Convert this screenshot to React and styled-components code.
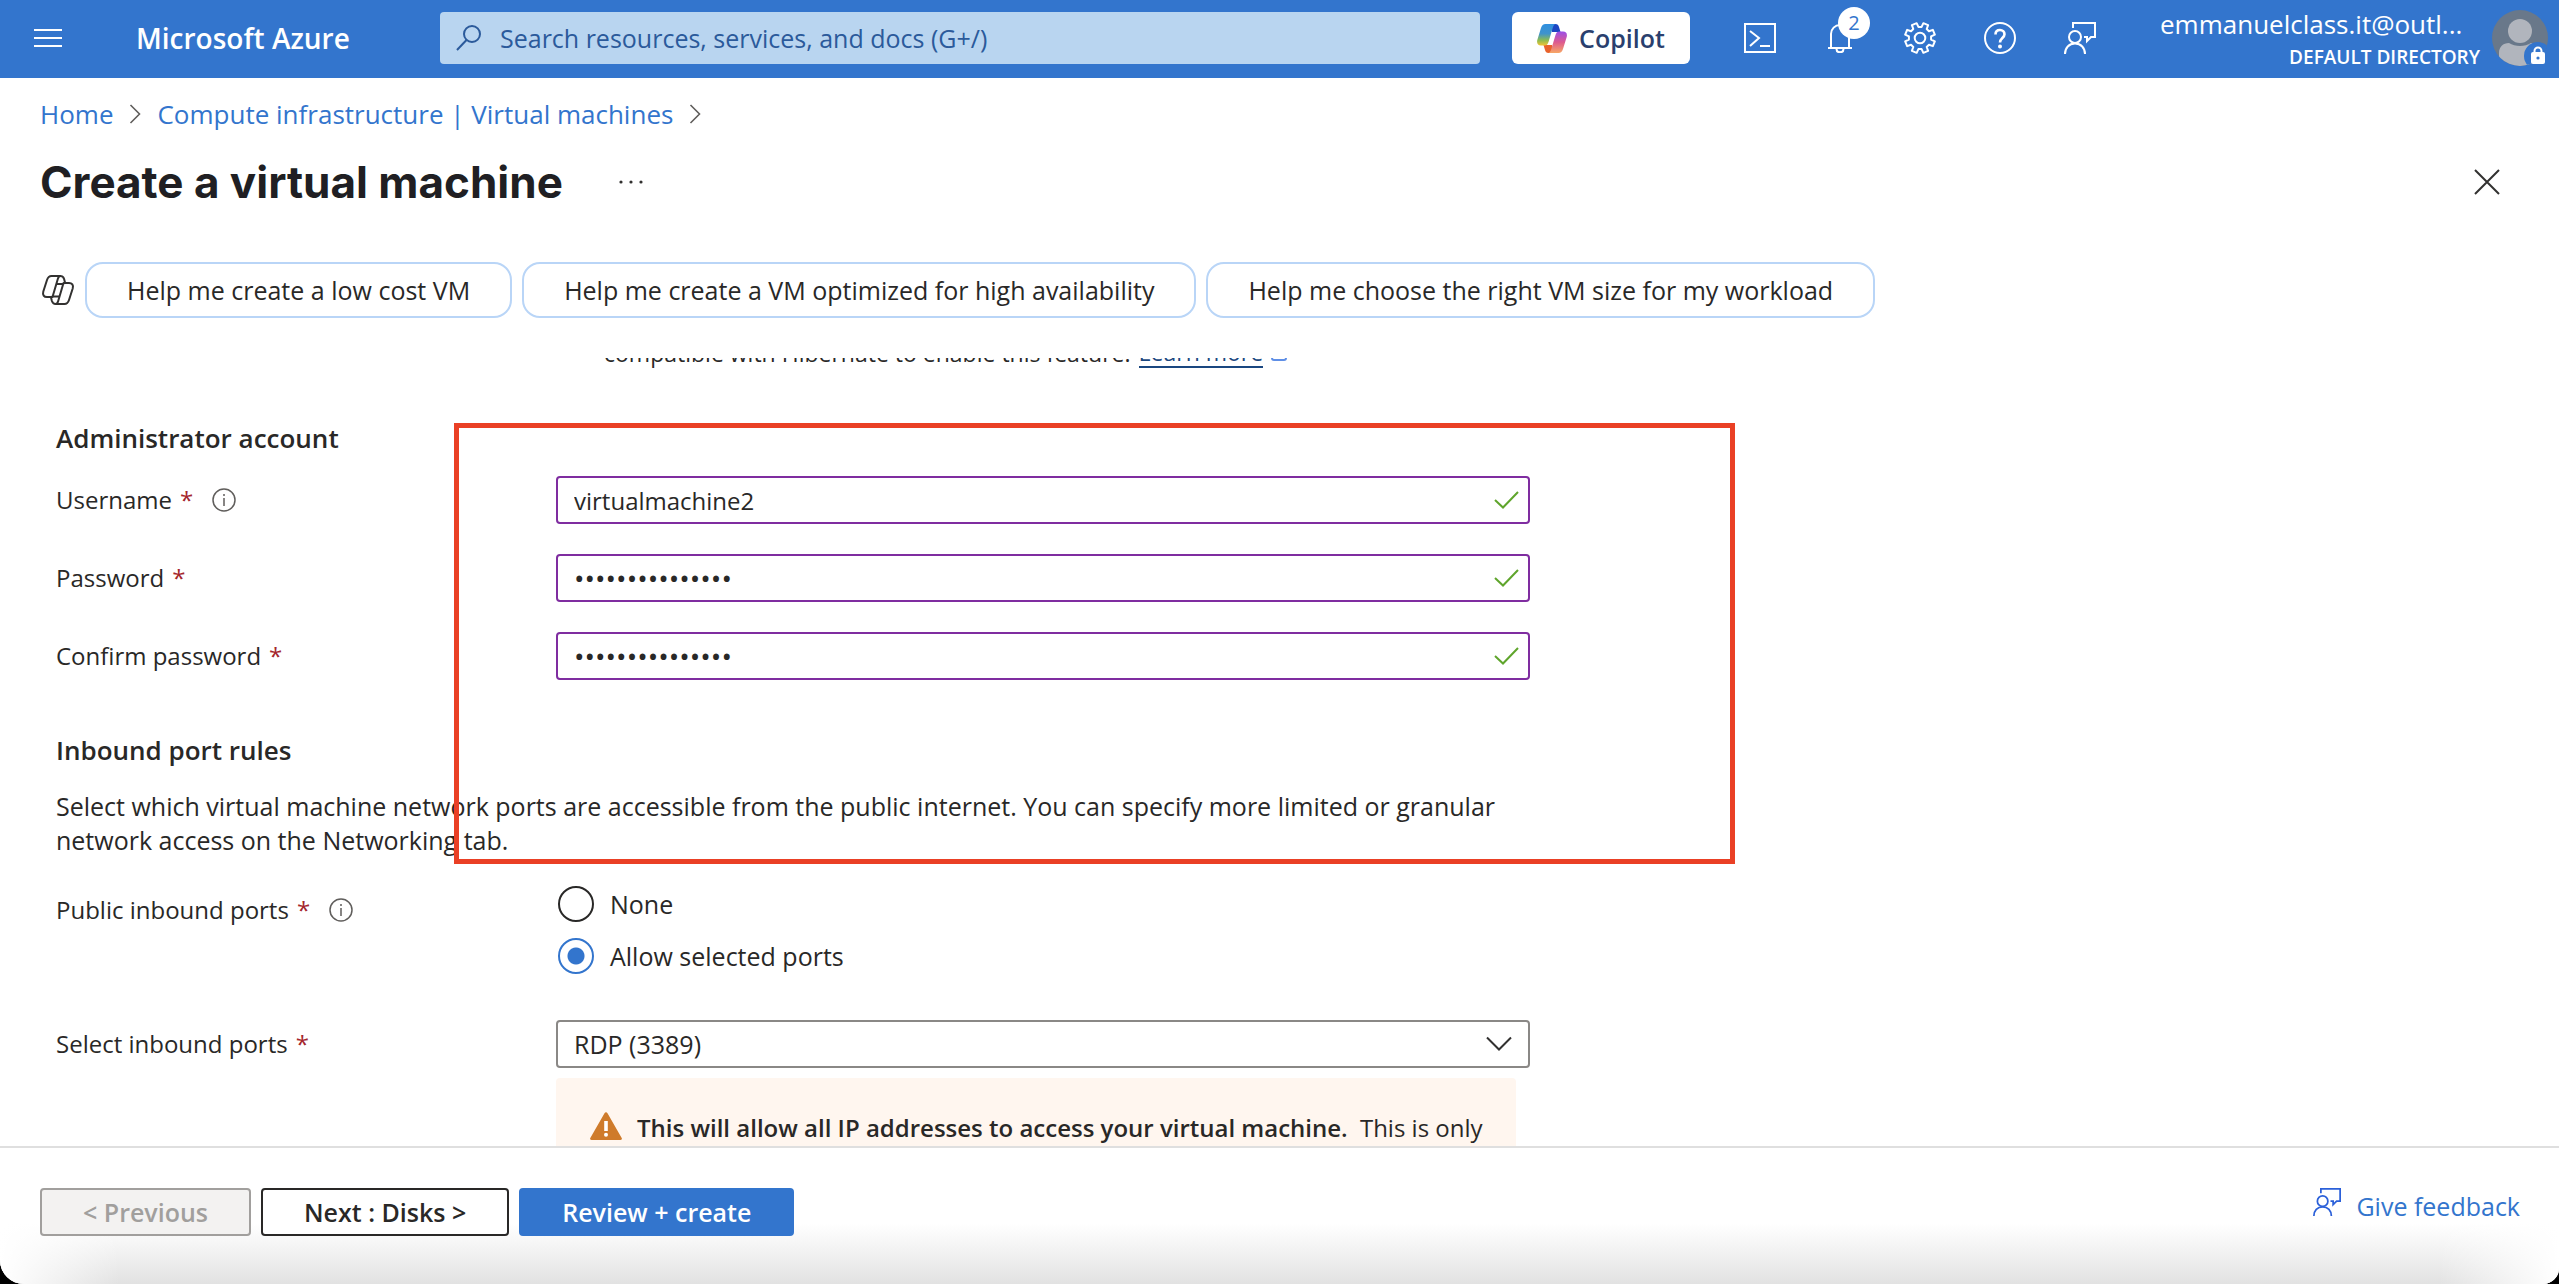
import styled, { createGlobalStyle } from 'styled-components';

const App = () => {
  return (
    <>
      <GlobalStyle />
      <Desktop>
        <Page>
          <Header>
            <IconButton aria-label='Show portal menu'>
              <svg width='28' height='20' viewBox='0 0 28 20' stroke='#fff' strokeWidth='2'>
                <path d='M0 2h28M0 10h28M0 18h28' />
              </svg>
            </IconButton>
            <Brand href='#home'>Microsoft Azure</Brand>
            <Search>
              <svg width='26' height='26' viewBox='0 0 26 26' fill='none' stroke='#2b5a9b' strokeWidth='2'>
                <circle cx='16' cy='9' r='8' />
                <path d='M10.5 15 1 25' />
              </svg>
              <input
                aria-label='Search resources, services, and docs'
                placeholder='Search resources, services, and docs (G+/)'
              />
            </Search>
            <CopilotButton>
              <CopilotLogo />
              Copilot
            </CopilotButton>
            <Tools>
              <IconButton aria-label='Cloud Shell'>
                <ShellIcon />
              </IconButton>
              <IconButton aria-label='Notifications'>
                <BellIcon />
                <Badge>2</Badge>
              </IconButton>
              <IconButton aria-label='Settings'>
                <GearIcon />
              </IconButton>
              <IconButton aria-label='Help'>
                <HelpIcon />
              </IconButton>
              <IconButton aria-label='Feedback'>
                <FeedbackIcon size={32} />
              </IconButton>
            </Tools>
            <Account>
              <AccountText>
                <Email>emmanuelclass.it@outl...</Email>
                <Directory>DEFAULT DIRECTORY</Directory>
              </AccountText>
              <Avatar />
            </Account>
          </Header>

          <Crumbs aria-label='Breadcrumb'>
            <a href='#home'>Home</a>
            <CrumbArrow />
            <a href='#vms'>Compute infrastructure | Virtual machines</a>
            <CrumbArrow />
          </Crumbs>

          <TitleBar>
            <h1>Create a virtual machine</h1>
            <IconButton aria-label='More'>
              <svg width='24' height='4' viewBox='0 0 24 4' fill='#323130'>
                <circle cx='2' cy='2' r='1.6' />
                <circle cx='12' cy='2' r='1.6' />
                <circle cx='22' cy='2' r='1.6' />
              </svg>
            </IconButton>
            <CloseButton aria-label='Close'>
              <svg width='26' height='26' viewBox='0 0 26 26' stroke='#323130' strokeWidth='2'>
                <path d='M1 1l24 24M25 1L1 25' />
              </svg>
            </CloseButton>
          </TitleBar>

          <Suggestions>
            <CopilotOutline />
            <Pill>Help me create a low cost VM</Pill>
            <Pill>Help me create a VM optimized for high availability</Pill>
            <Pill>Help me choose the right VM size for my workload</Pill>
          </Suggestions>

          <Content>
            <Form>
              <Hint>
                compatible with Hibernate to enable this feature.
                <a href='#hibernate'>Learn more</a>
                <svg width='16' height='16' viewBox='0 0 16 16' fill='none' stroke='#5f8fe6' strokeWidth='2'>
                  <path d='M6 2H1v11q0 2 2 2h10q2 0 2-2v-3M9 1h6v6M15 1 7 9' />
                </svg>
              </Hint>

              <SectionTitle>Administrator account</SectionTitle>
              <Highlight />
              <Row>
                <Label htmlFor='username'>
                  Username <Star>*</Star> <InfoIcon />
                </Label>
                <Field>
                  <TextInput id='username' defaultValue='virtualmachine2' />
                  <CheckMark />
                </Field>
              </Row>
              <Row>
                <Label htmlFor='password'>
                  Password <Star>*</Star>
                </Label>
                <Field>
                  <TextInput id='password' type='password' defaultValue='aaaaaaaaaaaaaaa' />
                  <CheckMark />
                </Field>
              </Row>
              <Row>
                <Label htmlFor='confirm'>
                  Confirm password <Star>*</Star>
                </Label>
                <Field>
                  <TextInput id='confirm' type='password' defaultValue='aaaaaaaaaaaaaaa' />
                  <CheckMark />
                </Field>
              </Row>

              <SectionTitle $spaced>Inbound port rules</SectionTitle>
              <Paragraph>
                Select which virtual machine network ports are accessible from the public internet. You can
                specify more limited or granular network access on the Networking tab.
              </Paragraph>

              <PortsRow>
                <Label as='span' id='ports-label'>
                  Public inbound ports <Star>*</Star> <InfoIcon />
                </Label>
                <RadioGroup role='radiogroup' aria-labelledby='ports-label'>
                  <RadioLabel>
                    <Radio name='ports' />
                    None
                  </RadioLabel>
                  <RadioLabel>
                    <Radio name='ports' defaultChecked />
                    Allow selected ports
                  </RadioLabel>
                </RadioGroup>
              </PortsRow>
              <SelectRow>
                <Label htmlFor='inbound'>
                  Select inbound ports <Star>*</Star>
                </Label>
                <SelectField>
                  <Select id='inbound'>
                    <option>RDP (3389)</option>
                  </Select>
                  <svg width='26' height='15' viewBox='0 0 26 15' fill='none' stroke='#323130' strokeWidth='2'>
                    <path d='M1 1l12 12L25 1' />
                  </svg>
                </SelectField>
              </SelectRow>
              <Warning>
                <WarningIcon />
                <p>
                  <strong>This will allow all IP addresses to access your virtual machine.</strong> This is only
                </p>
              </Warning>
            </Form>
          </Content>

          <Footer>
            <FooterButton disabled>&lt; Previous</FooterButton>
            <FooterButton>Next : Disks &gt;</FooterButton>
            <FooterButton $primary>Review + create</FooterButton>
            <FeedbackLink href='#feedback'>
              <FeedbackIcon size={28} />
              Give feedback
            </FeedbackLink>
          </Footer>
        </Page>
      </Desktop>
    </>
  );
};

const CrumbArrow = () => (
  <svg width='12' height='20' viewBox='0 0 12 20' fill='none' stroke='#605e5c' strokeWidth='1.6'>
    <path d='M1.5 1l9 9-9 9' />
  </svg>
);

const CheckMark = () => (
  <svg width='26' height='18' viewBox='0 0 26 18' fill='none' stroke='#5fa52c' strokeWidth='2'>
    <path d='M2 9l8 7.500L25 1' />
  </svg>
);

const InfoIcon = () => (
  <svg width='24' height='24' viewBox='0 0 24 24' fill='none' stroke='#605e5c' strokeWidth='1.5'>
    <circle cx='12' cy='12' r='11' />
    <path d='M12 10v8M12 6v2' />
  </svg>
);

const ShellIcon = () => (
  <svg width='32' height='30' viewBox='0 0 32 30' fill='none' stroke='#fff' strokeWidth='2'>
    <path d='M1 1h30v28H1zM6 8l9 7-9 8M16 23h10' />
  </svg>
);

const BellIcon = () => (
  <svg width='26' height='30' viewBox='0 0 26 30' fill='none' stroke='#fff' strokeWidth='2'>
    <path d='M1 25h24M4 25V11c0-5 4-9 9-9s9 4 9 9v14M9.500 26c0 2 1.500 3.300 3.500 3.300s3.500-1.300 3.500-3.300' />
  </svg>
);

const GearIcon = () => {
  // eight teeth around a ring
  const points = [];
  for (let i = 0; i < 8; i++) {
    const base = (i * Math.PI) / 4 + Math.PI / 8;
    [
      [-0.25, 11.2],
      [-0.17, 15.2],
      [0.17, 15.2],
      [0.25, 11.2],
    ].forEach(([turn, r]) => {
      points.push(`${16 + r * Math.cos(base + turn)},${16 + r * Math.sin(base + turn)}`);
    });
  }
  return (
    <svg width='32' height='32' viewBox='0 0 32 32' fill='none' stroke='#fff' strokeWidth='2'>
      <polygon points={points.join(' ')} strokeLinejoin='round' />
      <circle cx='16' cy='16' r='5.3' />
    </svg>
  );
};

const HelpIcon = () => (
  <svg width='32' height='32' viewBox='0 0 32 32' fill='none' stroke='#fff' strokeWidth='2'>
    <circle cx='16' cy='16' r='15' />
    <path d='M11.500 12.500c0-2.800 1.900-4.500 4.500-4.500s4.500 1.700 4.500 4.200c0 3.600-4.500 4-4.500 8.300' strokeWidth='2.600' />
    <circle cx='16' cy='24.500' r='1' />
  </svg>
);

const FeedbackIcon = ({ size }) => (
  <svg width={size} height={size} viewBox='0 0 32 32' fill='none' stroke='currentColor' strokeWidth='2'>
    <path d='M9 6V1h22v14h-4l-4 4v-4h-3' />
    <circle cx='11' cy='15' r='6' />
    <path d='M1 32c0-6 4-10.500 10-10.500S21 26 21 32' />
  </svg>
);

const WarningIcon = () => (
  <svg width='32' height='28' viewBox='0 0 32 28'>
    <path d='M14.500 1.200c.7-1.300 2.300-1.300 3 0L31.700 26c.6 1 0 2-1.200 2h-29c-1.200 0-1.800-1-1.200-2z' fill='#cf7b2b' />
    <path d='M16 9v10' stroke='#fff' strokeWidth='3.600' />
    <circle cx='16' cy='22.800' r='2' fill='#fff' />
  </svg>
);

const CopilotOutline = () => (
  <svg width='34' height='32' viewBox='0 0 34 32' fill='none' stroke='#323130' strokeWidth='2' strokeLinejoin='round'>
    <path d='M20 2h-9.500C8 2 6.800 3.500 6 6L2.300 17.500C1.300 21 3 23 6 23h5.500l5.300-18C17.400 3 18 2 19.500 2c2 0 3 1.200 3.600 3l1.300 5' />
    <path d='M14 30h9.500c2.500 0 3.700-1.500 4.500-4l3.700-11.500c1-3.500-.7-5.500-3.700-5.500h-5.500l-5.300 18c-.6 2-1.200 3-2.700 3-2 0-3-1.200-3.600-3L9.600 22' />
    <path d='M15.500 10h7M11 22.500h7.500' />
  </svg>
);

const CopilotLogo = () => (
  <svg width='30' height='29' viewBox='0 0 30 29'>
    <defs>
      <linearGradient id='cpLeft' x1='0' y1='0' x2='0' y2='1'>
        <stop offset='0' stopColor='#2f8fe0' />
        <stop offset='0.45' stopColor='#3f93cc' />
        <stop offset='0.75' stopColor='#8bbb52' />
        <stop offset='1' stopColor='#f2c433' />
      </linearGradient>
      <linearGradient id='cpRight' x1='0' y1='0' x2='0' y2='1'>
        <stop offset='0' stopColor='#9a4fe8' />
        <stop offset='0.5' stopColor='#dd5a8f' />
        <stop offset='1' stopColor='#f7a765' />
      </linearGradient>
    </defs>
    <path d='M14 0h4.500c2 0 3 1.200 3.500 3l1.500 5H15z' fill='#1c46c2' />
    <path d='M16 29h-4.500c-2 0-3-1.200-3.500-3l-1.500-5H15z' fill='#e8622c' />
    <path d='M8.500 0H19c-1.700 0-2.500 1.500-3 3l-4.500 15c-.8 2.500-1.800 3.500-4 3.500H4C.8 21.500-.5 19.500.3 16L4 4C4.900 1.200 6.200 0 8.500 0z' fill='url(#cpLeft)' />
    <path d='M21.500 29H11c1.700 0 2.500-1.500 3-3l4.500-15c.8-2.500 1.800-3.500 4-3.500H26c3.200 0 4.500 2 3.700 5.500L26 25c-.9 2.800-2.200 4-4.500 4z' fill='url(#cpRight)' />
    <path d='M15.500 8h3.300c-.6.800-1 1.800-1.300 2.800L14.300 21H11z' fill='#fff' />
  </svg>
);

const Avatar = () => (
  <svg width='56' height='56' viewBox='0 0 56 56'>
    <clipPath id='face'>
      <circle cx='28' cy='28' r='28' />
    </clipPath>
    <g clipPath='url(#face)'>
      <rect width='56' height='56' fill='#69788a' />
      <path d='M7 56V43c0-6 4-10 10-10 6 4 16 4 22 0 6 0 10 4 10 10v13z' fill='#b1b5bd' />
      <circle cx='28' cy='21' r='12' fill='#b1b5bd' />
      <circle cx='46' cy='46' r='14' fill='#3375cd' />
    </g>
    <rect x='39' y='42' width='14' height='12' rx='2' fill='#fff' />
    <path d='M42.500 43v-2a3.500 3.500 0 0 1 7 0v2' fill='none' stroke='#fff' strokeWidth='2' />
    <circle cx='46' cy='48' r='1.600' fill='#3375cd' />
  </svg>
);

const GlobalStyle = createGlobalStyle`
  * {
    box-sizing: border-box;
  }

  body {
    margin: 0;
    font-family: 'Open Sans', 'Noto Sans', sans-serif;
    font-size: 25px;
    line-height: 34px;
    color: #292827;
  }

  a {
    color: #3375cd;
    text-decoration: none;
  }

  button,
  input,
  select {
    font: inherit;
    color: inherit;
  }

  svg {
    display: block;
    flex: none;
  }
`;

const Desktop = styled.div`
  background: #000;
`;

const Page = styled.div`
  display: flex;
  flex-direction: column;
  height: 100vh;
  overflow: hidden;
  background: #fff;
  border-radius: 0 0 16px 24px;
`;

const Header = styled.header`
  display: flex;
  align-items: center;
  height: 78px;
  flex: none;
  padding: 0 11px 2px 34px;
  background: #3375cd;
  color: #fff;
`;

const IconButton = styled.button`
  position: relative;
  display: flex;
  align-items: center;
  justify-content: center;
  min-width: 28px;
  padding: 0;
  border: 0;
  background: none;
  cursor: pointer;
`;

const Brand = styled.a`
  width: 304px;
  margin-left: 74px;
  color: #fff;
  font-size: 28px;
  font-weight: 600;
  white-space: nowrap;
`;

const Search = styled.label`
  display: flex;
  align-items: center;
  gap: 18px;
  flex: 0 1 1040px;
  height: 52px;
  padding: 0 16px;
  border-radius: 4px;
  background: #b9d5f0;

  input {
    flex: 1;
    min-width: 0;
    padding: 0;
    border: 0;
    outline: 0;
    background: none;
  }

  input::placeholder {
    color: #2b5a9b;
    opacity: 1;
  }
`;

const CopilotButton = styled.button`
  display: flex;
  align-items: center;
  justify-content: center;
  gap: 12px;
  width: 178px;
  height: 52px;
  flex: none;
  margin-left: 32px;
  padding: 0;
  border: 0;
  border-radius: 6px;
  background: #fff;
  color: #2a3f6e;
  font-size: 25px;
  font-weight: 600;
`;

const Tools = styled.div`
  display: flex;
  align-items: center;
  gap: 48px;
  margin-left: 54px;

  button {
    width: 32px;
    color: #fff;
  }
`;

const Badge = styled.span`
  position: absolute;
  top: -16px;
  left: 14px;
  width: 32px;
  height: 32px;
  border-radius: 50%;
  background: #fff;
  color: #3375cd;
  font-size: 20px;
  line-height: 32px;
  text-align: center;
`;

const Account = styled.div`
  display: flex;
  align-items: center;
  gap: 12px;
  margin-left: auto;
`;

const AccountText = styled.div`
  display: flex;
  flex-direction: column;
  width: 320px;
`;

const Email = styled.span`
  font-size: 26px;
  line-height: 38px;
`;

const Directory = styled.span`
  align-self: flex-end;
  font-size: 19px;
  font-weight: 600;
  line-height: 28px;
`;

const Crumbs = styled.nav`
  display: flex;
  align-items: center;
  gap: 16px;
  flex: none;
  padding: 19px 40px;
  font-size: 26px;
`;

const TitleBar = styled.div`
  display: flex;
  align-items: center;
  flex: none;
  height: 64px;
  padding: 0 58px 0 40px;

  h1 {
    margin: 0 54px 0 0;
    color: #201f23;
    font-family: Inter, sans-serif;
    font-size: 44px;
    font-weight: 700;
    line-height: 64px;
  }
`;

const CloseButton = styled(IconButton)`
  margin-left: auto;
`;

const Suggestions = styled.div`
  display: flex;
  align-items: center;
  gap: 10px;
  flex: none;
  padding: 48px 40px 40px 41px;
`;

const Pill = styled.button`
  height: 56px;
  padding: 0 40px;
  border: 2px solid #b9d5f7;
  border-radius: 18px;
  background: #fff;
  white-space: nowrap;
`;

const Content = styled.main`
  flex: 1;
  min-height: 0;
  overflow: hidden;
`;

const Form = styled.div`
  position: relative;
  max-width: 1530px;
  margin-top: -22px;
  padding-left: 56px;
`;

const Hint = styled.p`
  display: flex;
  align-items: center;
  gap: 8px;
  margin: 0;
  padding-left: 548px;
  font-size: 23px;

  a {
    color: #1a4780;
    border-bottom: 2px solid #1a4780;
    line-height: 28px;
  }
`;

const SectionTitle = styled.h2`
  margin: ${(props) => (props.$spaced ? '53px 0 22px' : '51px 0 21px')};
  font-size: 26px;
  font-weight: 600;
  line-height: 34px;
`;

const Highlight = styled.div`
  position: absolute;
  top: 87px;
  left: 454px;
  width: 1281px;
  height: 441px;
  border: 5px solid #ea4025;
  pointer-events: none;
`;

const Row = styled.div`
  display: grid;
  grid-template-columns: 500px 1fr;
  align-items: center;
  margin-bottom: 30px;
`;

const PortsRow = styled(Row)`
  margin-bottom: 46px;
`;

const SelectRow = styled(Row)`
  margin-bottom: 10px;
`;

const Label = styled.label`
  display: flex;
  align-items: center;
  gap: 8px;
  font-size: 24px;

  svg {
    margin-left: 11px;
  }

  ${PortsRow} > & {
    align-self: start;
    padding-top: 7px;
  }
`;

const Star = styled.span`
  color: #a4262c;
`;

const Field = styled.div`
  position: relative;

  svg {
    position: absolute;
    top: 50%;
    right: 11px;
    transform: translateY(-50%);
    pointer-events: none;
  }
`;

const SelectField = styled(Field)`
  svg {
    right: 18px;
  }
`;

const TextInput = styled.input`
  display: block;
  width: 100%;
  height: 48px;
  padding: 0 48px 0 16px;
  border: 2px solid #7f2da0;
  border-radius: 4px;
  background: #fff;
  font-size: ${(props) => (props.type === 'password' ? '28px' : '24px')};
`;

const Paragraph = styled.p`
  max-width: 1474px;
  margin: 0 0 29px;
`;

const RadioGroup = styled.div`
  display: flex;
  flex-direction: column;
  gap: 16px;
  padding-left: 2px;
`;

const RadioLabel = styled.label`
  display: flex;
  align-items: center;
  gap: 16px;
  height: 36px;
`;

const Radio = styled.input.attrs({ type: 'radio' })`
  appearance: none;
  width: 36px;
  height: 36px;
  margin: 0;
  border: 2px solid #292827;
  border-radius: 50%;
  background: #fff;

  &:checked {
    border-color: #3375cd;
    background: radial-gradient(circle, #3375cd 8px, #fff 9px);
  }
`;

const Select = styled.select`
  appearance: none;
  display: block;
  width: 100%;
  height: 48px;
  padding: 0 48px 0 16px;
  border: 2px solid #8a8886;
  border-radius: 4px;
  background: #fff;
`;

const Warning = styled.div`
  display: flex;
  align-items: flex-start;
  gap: 15px;
  margin: 0 14px 0 500px;
  padding: 34px 16px 34px 34px;
  border-radius: 4px;
  background: #fff6ef;

  p {
    margin: 0;
    font-size: 24px;
    line-height: 32px;
  }

  strong {
    margin-right: 6px;
    font-weight: 600;
  }
`;

const Footer = styled.footer`
  display: flex;
  align-items: flex-start;
  gap: 10px;
  flex: none;
  height: 138px;
  padding: 40px 39px 0 40px;
  border-top: 2px solid #dfdfdf;
  background:
    linear-gradient(90deg, #fff, transparent 120px calc(100% - 120px), #fff),
    linear-gradient(#fff 76px, #e2e2e2);
`;

const FooterButton = styled.button`
  height: 48px;
  padding: 0 41px;
  border: 2px solid ${(props) => (props.$primary ? '#3375cd' : '#292827')};
  border-radius: 4px;
  background: ${(props) => (props.$primary ? '#3375cd' : '#fff')};
  color: ${(props) => (props.$primary ? '#fff' : '#292827')};
  font-weight: 600;
  line-height: 34px;

  &:disabled {
    border-color: #a19f9d;
    background: #f3f2f1;
    color: #a19f9d;
  }
`;

const FeedbackLink = styled.a`
  display: flex;
  align-items: flex-start;
  gap: 15px;
  margin-left: auto;
  line-height: 36px;

  svg {
    color: #2b60d9;
  }
`;

export default App;
